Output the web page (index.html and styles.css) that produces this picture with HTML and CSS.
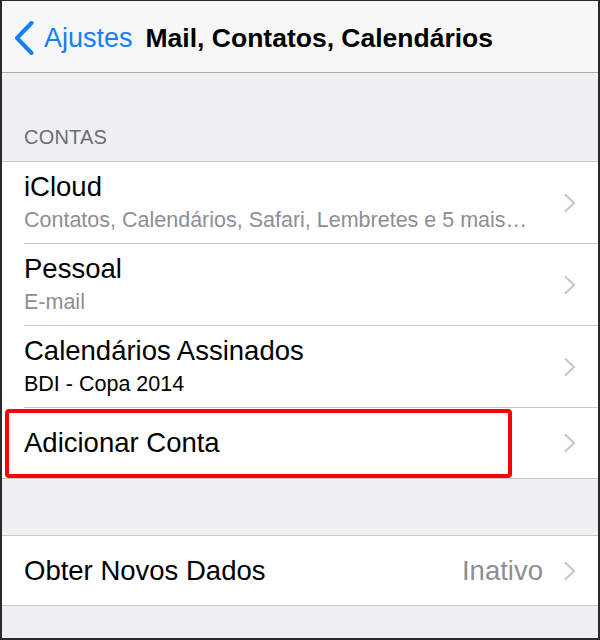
FILE: index.html
```html
<!DOCTYPE html>
<html lang="pt">
<head>
<meta charset="utf-8">
<title>Mail, Contatos, Calendários</title>
<link rel="stylesheet" href="styles.css">
</head>
<body>
<div class="screen">
  <header class="nav">
    <div class="back">
      <svg class="back-icon" width="20" height="34" viewBox="0 0 20 34"><polyline points="17.5,2 3,17 17.5,32" fill="none" stroke="#157efb" stroke-width="4" stroke-linecap="round" stroke-linejoin="round"/></svg>
      <span class="back-label">Ajustes</span>
    </div>
    <h1 class="title">Mail, Contatos, Calendários</h1>
  </header>

  <div class="section-header">CONTAS</div>
  <ul class="group">
    <li class="row two">
      <div class="cell">
        <div class="texts">
          <div class="main">iCloud</div>
          <div class="sub">Contatos, Calendários, Safari, Lembretes e 5 mais…</div>
        </div>
        <svg class="chev" width="13" height="20" viewBox="0 0 13 20"><polyline points="2,1.5 11,10 2,18.5" fill="none" stroke="#c7c7cc" stroke-width="2.2"/></svg>
      </div>
    </li>
    <li class="row two">
      <div class="cell">
        <div class="texts">
          <div class="main">Pessoal</div>
          <div class="sub">E-mail</div>
        </div>
        <svg class="chev" width="13" height="20" viewBox="0 0 13 20"><polyline points="2,1.5 11,10 2,18.5" fill="none" stroke="#c7c7cc" stroke-width="2.2"/></svg>
      </div>
    </li>
    <li class="row two">
      <div class="cell">
        <div class="texts">
          <div class="main">Calendários Assinados</div>
          <div class="sub dark">BDI - Copa 2014</div>
        </div>
        <svg class="chev" width="13" height="20" viewBox="0 0 13 20"><polyline points="2,1.5 11,10 2,18.5" fill="none" stroke="#c7c7cc" stroke-width="2.2"/></svg>
      </div>
    </li>
    <li class="row one last">
      <div class="cell">
        <div class="main">Adicionar Conta</div>
        <svg class="chev" width="13" height="20" viewBox="0 0 13 20"><polyline points="2,1.5 11,10 2,18.5" fill="none" stroke="#c7c7cc" stroke-width="2.2"/></svg>
      </div>
    </li>
  </ul>

  <ul class="group second">
    <li class="row one last short">
      <div class="cell">
        <div class="main">Obter Novos Dados</div>
        <span class="value">Inativo</span>
        <svg class="chev" width="13" height="20" viewBox="0 0 13 20"><polyline points="2,1.5 11,10 2,18.5" fill="none" stroke="#c7c7cc" stroke-width="2.2"/></svg>
      </div>
    </li>
  </ul>

  <div class="highlight"></div>
</div>
</body>
</html>
```

FILE: styles.css
```css
html, body {
  margin: 0;
  padding: 0;
  background: #2a2a2a;
}

.screen {
  position: relative;
  width: 600px;
  height: 640px;
  box-sizing: border-box;
  border-style: solid;
  border-color: #2a2a2a;
  border-width: 1px 2px 2px 2px;
  background: #efeff4;
  font-family: "Liberation Sans", Arial, sans-serif;
  color: #000;
  overflow: hidden;
}

.nav {
  height: 72px;
  background: #f7f7f7;
  border-bottom: 1px solid #a9a9ad;
  display: flex;
  align-items: center;
  padding-top: 4px;
  box-sizing: border-box;
}

.back {
  display: flex;
  align-items: center;
  margin-left: 12px;
  color: #157efb;
}

.back-icon {
  display: block;
  margin-top: -2px;
}

.back-label {
  font-size: 27px;
  margin-left: 10px;
}

.title {
  margin: 0 0 0 13px;
  font-size: 26.5px;
  font-weight: bold;
}

.section-header {
  height: 88px;
  box-sizing: border-box;
  padding: 53px 0 0 22px;
  font-size: 20px;
  color: #6d6d72;
  letter-spacing: 0.2px;
}

.group {
  list-style: none;
  margin: 0;
  padding: 0;
  background: #fff;
  border-top: 1px solid #c8c7cc;
  border-bottom: 1px solid #c8c7cc;
}

.group.second {
  margin-top: 56px;
}

.row {
  padding-left: 22px;
}

.cell {
  display: flex;
  align-items: center;
  border-bottom: 1px solid #c8c7cc;
  padding-right: 22px;
  box-sizing: border-box;
}

.row.last .cell {
  border-bottom: none;
}

.row.two .cell {
  height: 82px;
}

.row.one .cell {
  height: 70px;
}

.row.one.short .cell {
  height: 69px;
}

.texts {
  flex: 1;
  min-width: 0;
  align-self: flex-start;
  padding-top: 9px;
}

.main {
  font-size: 27.5px;
  line-height: 32px;
  flex: 1;
}

.texts .main {
  flex: none;
}

.sub {
  font-size: 21.5px;
  line-height: 24px;
  margin-top: 5px;
  color: #8e8e93;
  white-space: nowrap;
}

.sub.dark {
  color: #000;
}

.value {
  font-size: 27.5px;
  color: #8e8e93;
  margin-right: 20px;
}

.chev {
  display: block;
  flex: none;
}

.highlight {
  position: absolute;
  left: 3px;
  top: 408px;
  width: 507px;
  height: 69px;
  box-sizing: border-box;
  border: 4px solid #ff0000;
  border-radius: 4px;
}
```
